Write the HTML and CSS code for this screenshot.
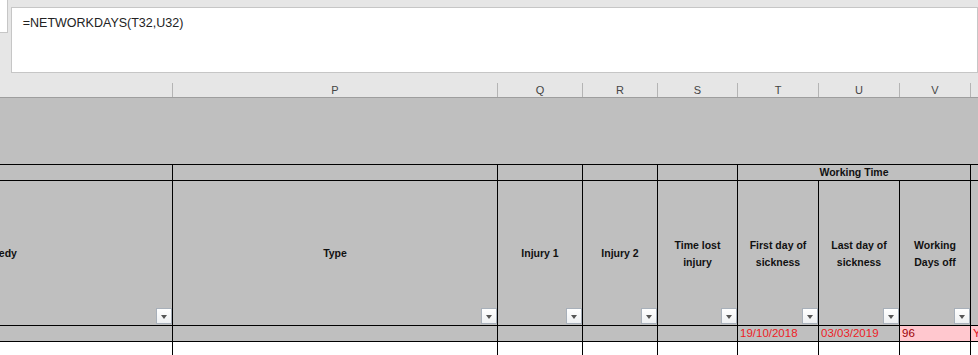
FILE: index.html
```html
<!DOCTYPE html>
<html lang="en">
<head>
    <meta charset="UTF-8">
    <title>Sickness log - NETWORKDAYS</title>
    <link rel="stylesheet" href="styles.css">
</head>
<body>
    <div class="toolbar">
        <div class="name-box"></div>
        <div class="formula-box">=NETWORKDAYS(T32,U32)</div>
    </div>

    <div class="sheet">
        <div class="col-letters">
            <div class="letter"></div>
            <div class="letter">P</div>
            <div class="letter">Q</div>
            <div class="letter">R</div>
            <div class="letter">S</div>
            <div class="letter">T</div>
            <div class="letter">U</div>
            <div class="letter">V</div>
            <div class="letter"></div>
        </div>

        <div class="band"></div>

        <!-- group heading row -->
        <div class="row group-row">
            <div class="cell"></div>
            <div class="cell"></div>
            <div class="cell"></div>
            <div class="cell"></div>
            <div class="cell"></div>
            <div class="cell span-3 head">Working Time</div>
            <div class="cell"></div>
        </div>

        <!-- column titles with filter buttons -->
        <div class="row title-row">
            <div class="cell head">Remedy<span class="filter"></span></div>
            <div class="cell head">Type<span class="filter"></span></div>
            <div class="cell head">Injury 1<span class="filter"></span></div>
            <div class="cell head">Injury 2<span class="filter"></span></div>
            <div class="cell head">Time lost<br>injury<span class="filter"></span></div>
            <div class="cell head">First day of<br>sickness<span class="filter"></span></div>
            <div class="cell head">Last day of<br>sickness<span class="filter"></span></div>
            <div class="cell head">Working<br>Days off<span class="filter"></span></div>
            <div class="cell"></div>
        </div>

        <div class="row data-row">
            <div class="cell"></div>
            <div class="cell"></div>
            <div class="cell"></div>
            <div class="cell"></div>
            <div class="cell"></div>
            <div class="cell red">19/10/2018</div>
            <div class="cell red">03/03/2019</div>
            <div class="cell bad">96</div>
            <div class="cell bad red">Y</div>
        </div>

        <div class="row blank-row">
            <div class="cell"></div>
            <div class="cell"></div>
            <div class="cell"></div>
            <div class="cell"></div>
            <div class="cell"></div>
            <div class="cell"></div>
            <div class="cell"></div>
            <div class="cell"></div>
            <div class="cell"></div>
        </div>
    </div>
</body>
</html>
```

FILE: styles.css
```css
* { margin: 0; padding: 0; box-sizing: border-box; }

body {
    font-family: 'Liberation Sans', Arial, sans-serif;
    background: #e6e6e6;
    color: #000000;
    width: 978px;
    height: 355px;
    overflow: hidden;
}

.toolbar {
    height: 83px;
    display: flex;
    align-items: flex-start;
}

.name-box {
    width: 8px;
    height: 33px;
    background: #ffffff;
    border-right: 1px solid #c6c6c6;
    border-bottom: 1px solid #c6c6c6;
}

.formula-box {
    margin-left: 3px;
    margin-top: 7px;
    width: 1000px;
    height: 66px;
    background: #ffffff;
    border: 1px solid #c6c6c6;
    padding: 8px 0 0 11px;
    font-size: 12.5px;
    color: #222222;
}

.sheet {
    margin-left: -179px;
    width: 1260px;
}

.col-letters,
.row {
    display: grid;
    grid-template-columns: 352px 325px 85px 75px 80px 81px 81px 71px 110px;
}

.col-letters {
    height: 15px;
    border-bottom: 1px solid #9e9e9e;
}

.letter {
    font-size: 11px;
    color: #444444;
    text-align: center;
    line-height: 14px;
    border-right: 1px solid #b4b4b4;
}

.band {
    height: 67px;
    background: #bfbfbf;
    border-bottom: 1px solid #000000;
}

.row {
    background: #bfbfbf;
    border-bottom: 1px solid #000000;
}

.cell {
    border-right: 1px solid #000000;
    position: relative;
    overflow: hidden;
}

.span-3 {
    grid-column: span 3;
}

.head {
    font-weight: bold;
    font-size: 10.5px;
    line-height: 17px;
    color: #111111;
    text-align: center;
    display: flex;
    align-items: center;
    justify-content: center;
}

.group-row {
    height: 16px;
}

.title-row {
    height: 145px;
}

.title-row .head {
    padding-top: 1px;
}

.data-row {
    height: 16px;
}

.data-row .cell {
    font-size: 11.5px;
    line-height: 15px;
    padding-left: 2px;
}

.red {
    color: #ee1c25;
}

.bad {
    background: #ffc7ce;
    color: #9c0006;
}

.bad.red {
    color: #e0101c;
}

.blank-row {
    height: 40px;
    background: #ffffff;
    border-bottom: none;
}

.filter {
    position: absolute;
    right: 0;
    bottom: 1px;
    width: 16px;
    height: 16px;
    border: 1px solid #a8b0ba;
    background: linear-gradient(#ffffff, #eef0f2);
}

.filter::after {
    content: '';
    position: absolute;
    left: 4px;
    top: 6px;
    border-left: 3.5px solid transparent;
    border-right: 3.5px solid transparent;
    border-top: 4px solid #555555;
}
```
